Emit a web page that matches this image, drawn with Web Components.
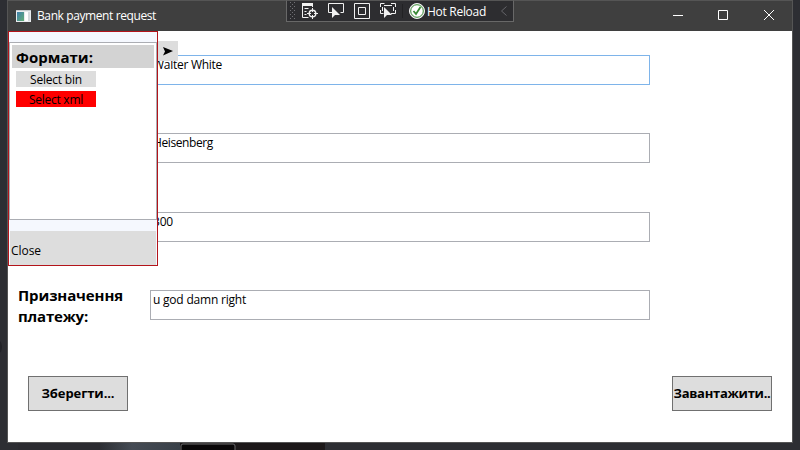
<!DOCTYPE html>
<html lang="uk"><head><meta charset="utf-8"><title>Bank payment request</title>
<style>html,body{margin:0;width:800px;height:450px;overflow:hidden;background:#2d2e33}</style></head><body>
<payment-window></payment-window>
<script>
const define=(name,html,ready)=>customElements.define(name,class extends HTMLElement{
 connectedCallback(){if(this.shadowRoot)return;const t=document.createElement('template');t.innerHTML=html;
 this.attachShadow({mode:'open'}).append(t.content.cloneNode(true));if(ready)ready.call(this)}});

define('fit-text',`<style>:host{display:block;white-space:nowrap}span{display:inline-block;white-space:pre}</style><span><slot></slot></span>`,function(){
 const s=this.shadowRoot.querySelector('span'),w=+this.getAttribute('width');
 if(w)s.style.letterSpacing=((w-s.getBoundingClientRect().width)/this.textContent.length)+'px';
});
define('app-icon',`<style>:host{display:block;width:15px;height:12px}svg{display:block}</style>
<svg width="15" height="12" viewBox="0 0 15 12"><defs><linearGradient id="g" x2="1" y2="1"><stop stop-color="#3f7fae"/><stop offset="1" stop-color="#62ad74"/></linearGradient></defs><path fill="#e9ecee" d="M0 0h15v12H0z"/><path fill="#c4c9cc" d="M0 0h15v1H0z"/><path fill="url(#g)" d="M1 2h7v9H1z"/><path fill="#fff" d="M9 2h3v9H9z"/><path fill="#d5dadd" d="M12 2h2v9h-2z"/></svg>`);
define('debug-toolbar',`<style>:host{display:block;box-sizing:border-box;width:228px;height:22px;background:#2d2d30;border:1px solid #686868;border-top-color:#555;position:relative}svg{display:block}fit-text{position:absolute;left:140px;top:2px;color:#fff;font:12px/18px "Open Sans","Noto Sans",sans-serif}</style>
<svg width="226" height="20" viewBox="287 1 226 20" fill="none" stroke="#f1f1f1"><defs><pattern id="d" width="4" height="4" patternUnits="userSpaceOnUse" x="290" y="2"><path d="M0 0h1v1H0zM2 2h1v1H2z" fill="#707074" stroke="none"/></pattern></defs>
<path d="M290 2h5v17h-5z" fill="url(#d)" stroke="none"/>
<path d="M302 3h11v3h-11z" fill="#f1f1f1" stroke="none"/><path d="M302.500 5v12.500h6M312.500 5v2M304.500 8.500h4M304.500 11.500h2M304.500 14.500h2"/><circle cx="312.500" cy="13.500" r="3.300" stroke-width="1.400"/><path d="M312.500 8v4M312.500 15v4M307 13.500h4M314 13.500h4"/>
<path d="M332 12.500h-3.500v-9h15v9h-3"/><path d="M332 7v11l3-3h5z" fill="#f1f1f1" stroke="none"/>
<path d="M354.500 3.500h15v15h-15zM358.500 7.500h7v7h-7z"/>
<path d="M380.500 7v-3.500h4M391 3.500h4.500V7M380.500 10v3.500h3M395.500 10v3.500H391M384 5.500h8M382.500 7v4M393.500 7v4"/><path d="M384 7v11l3-3h5z" fill="#f1f1f1" stroke="none"/>
<path d="M402.500 4v14" stroke="#222224"/>
<circle cx="417" cy="11" r="7.500" fill="#f4f4f4"/><circle cx="417" cy="11" r="6.300" fill="#fff" stroke="#388a34"/><path d="M413.500 11l2.500 3 4.500-7" stroke="#388a34" stroke-width="1.800"/>
<path d="M506.500 6.500l-5 4.500 5 4.500" stroke="#65656a"/></svg><fit-text width="59">Hot Reload</fit-text>`);
define('title-bar',`<style>:host{display:flex;box-sizing:border-box;height:31px;background:#3f3f3f;border-top:1px solid #555;align-items:center;padding-left:8px;position:relative;color:#fff}
fit-text{font:12px/18px "Open Sans","Noto Sans",sans-serif;margin-left:6px}debug-toolbar{position:absolute;left:278px;top:-1px}.controls{margin-left:auto;margin-right:12px;margin-top:-2px}</style>
<app-icon></app-icon><fit-text width="119">Bank payment request</fit-text><debug-toolbar></debug-toolbar>
<svg class="controls" width="112" height="28" viewBox="668 1 112 28" fill="none" stroke="#fff"><path d="M673 15.500h10M718.500 10.500h9v9h-9zM764 10l10 10M774 10l-10 10"/></svg>`);
define('text-field',`<style>:host{display:block;box-sizing:border-box;width:500px;height:30px;border:1px solid #abadb3;background:#fff;padding:0 2px;font:12px/18px "Open Sans","Noto Sans",sans-serif;color:#000}:host([active]){border-color:#7eb4ea}</style><slot></slot>`);
define('push-button',`<style>:host{display:flex;box-sizing:border-box;width:100px;height:35px;background:#ddd;border:1px solid #707070;align-items:center;justify-content:center;overflow:hidden;color:#000;font:bold 13px/20px "Open Sans","Noto Sans",sans-serif}</style><slot></slot>`);
define('format-option',`<style>:host{display:flex;justify-content:center;width:80px;height:16px;background:#ddd;color:#000;font:12px/17px "Open Sans","Noto Sans",sans-serif;overflow:hidden}:host([selected]){background:red}</style><slot></slot>`);
define('format-panel',`<style>:host{display:flex;flex-direction:column;box-sizing:border-box;width:150px;height:235px;background:#f5f8fe;border:1px solid #b3141a;color:#000}
.list{box-sizing:border-box;height:178px;margin-top:10px;border:1px solid #abadb3;background:#fff;padding:2px}
h2{margin:0;height:23px;background:#d3d3d3;padding-left:4px;font:bold 15px/25px "Open Sans","Noto Sans",sans-serif}
format-option{margin:3px 0 0 4px}format-option+format-option{margin-top:4px}
.close{margin:11px 1px 0;height:34px;background:#ddd;padding-left:1px;font:12px/40px "Open Sans","Noto Sans",sans-serif}</style>
<div class="list"><h2><fit-text width="77">Формати:</fit-text></h2><format-option><fit-text width="52">Select bin</fit-text></format-option><format-option selected><fit-text width="54">Select xml</fit-text></format-option></div><div class="close"><fit-text width="30">Close</fit-text></div>`);
define('payment-form',`<style>:host{display:block;position:relative;height:411px;background:#fff}
.fields{display:grid;grid-template-columns:142px 500px;grid-template-rows:30px 30px 30px 40px;row-gap:48.300px;padding-top:24px}
text-field{grid-column:2}label{padding-left:10px;margin-top:-5px;font:bold 15px/21px "Open Sans","Noto Sans",sans-serif;color:#000}label+text-field{grid-row:4}
.actions{display:flex;justify-content:space-between;margin:46.100px 20px 0}
format-panel{position:absolute;left:0;top:0}.arrow{position:absolute;left:150px;top:10px;width:20px;height:20px;background:#ddd}</style>
<div class="fields"><text-field active><fit-text width="69">Walter White</fit-text></text-field><text-field><fit-text width="60">Heisenberg</fit-text></text-field><text-field><fit-text width="20">300</fit-text></text-field><label><fit-text width="105">Призначення</fit-text><fit-text width="70">платежу:</fit-text></label><text-field><fit-text width="93">u god damn right</fit-text></text-field></div>
<div class="actions"><push-button><fit-text width="73">Зберегти...</fit-text></push-button><push-button><fit-text width="97">Завантажити..</fit-text></push-button></div>
<format-panel></format-panel><svg class="arrow" viewBox="0 0 20 20"><path d="M5 6l10 4-10 4.500L7 10.500z"/></svg>`);
define('payment-window',`<style>:host{display:block;position:relative;isolation:isolate;width:800px;height:450px}.frame{box-sizing:border-box;margin-left:7px;width:786px;height:443px;border:1px solid #555;border-top:0}.backdrop{position:absolute;inset:0;z-index:-1;width:800px;height:450px}</style>
<svg class="backdrop" viewBox="0 0 800 450"><defs><linearGradient id="s"><stop stop-color="#2d2f34"/><stop offset=".4" stop-color="#454b54"/><stop offset="1" stop-color="#3a4149"/></linearGradient></defs><path fill="#2d2e33" d="M0 0h800v450H0z"/><ellipse cx="-1" cy="347" rx="3" ry="6" fill="#222328"/><path fill="#2c2c31" d="M18 443h82v7H18z"/><path fill="url(#s)" d="M100 443h80v7h-80z"/><path fill="#1c1819" d="M180 443h145v7H180z"/><path d="M181 450v-4q0-2 2-2h50q2 0 2 2v4" fill="#080607" stroke="#68686b"/></svg>
<div class="frame"><title-bar></title-bar><payment-form></payment-form></div>`);
</script></body></html>
